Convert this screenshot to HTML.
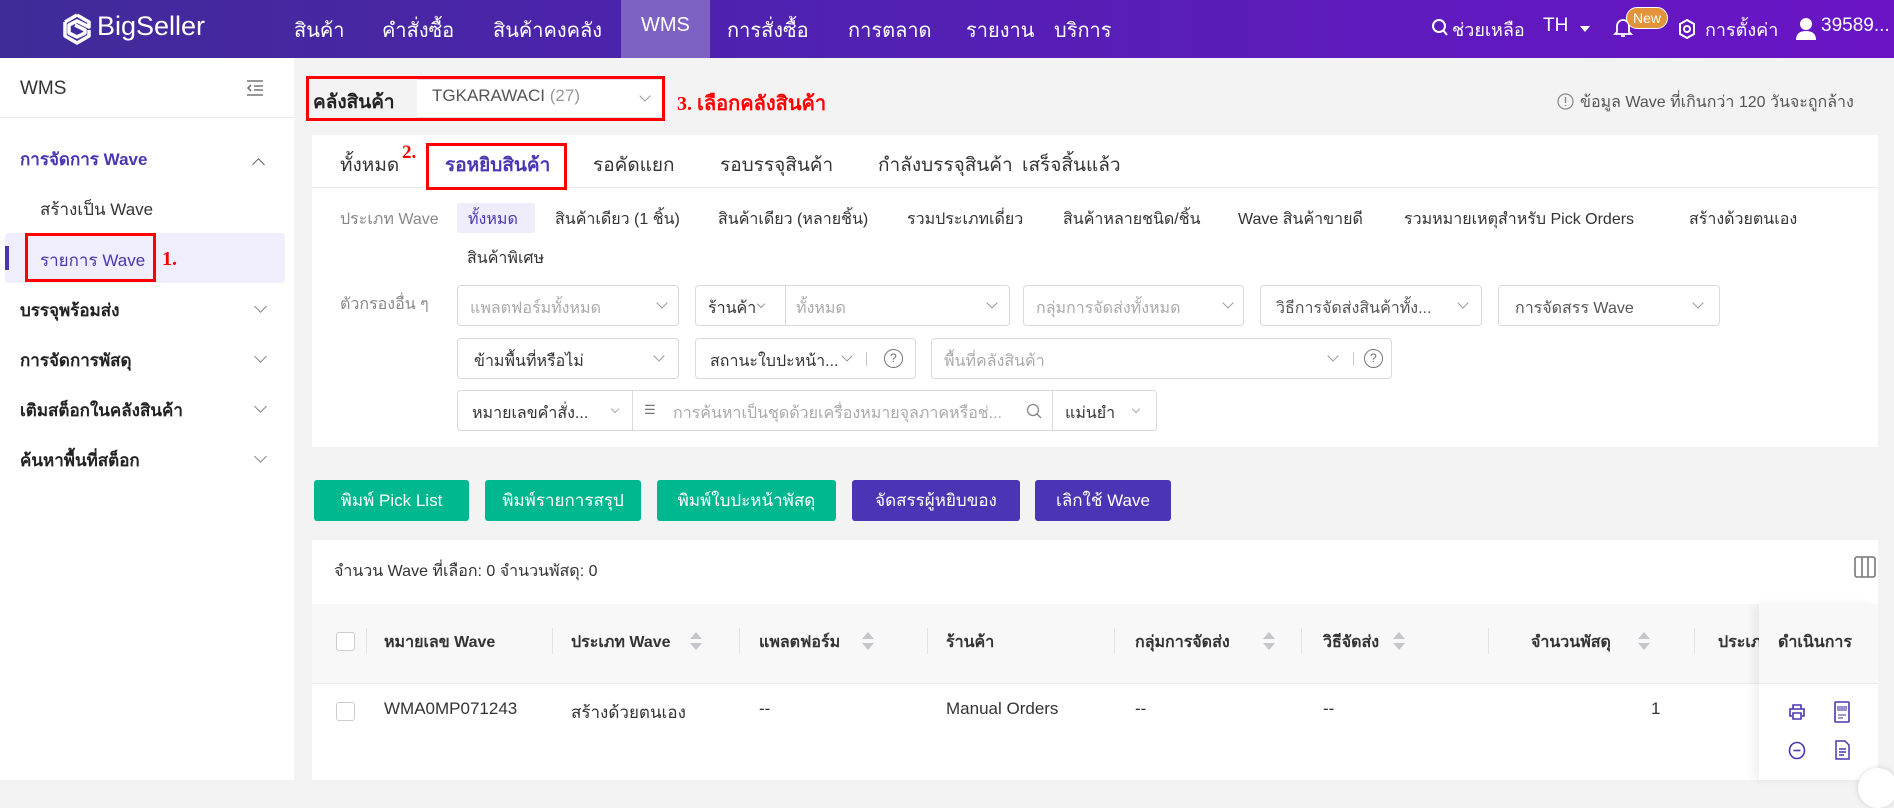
<!DOCTYPE html>
<html><head><meta charset="utf-8">
<style>
*{box-sizing:border-box;margin:0;padding:0}
body{width:1894px;height:780px;overflow:hidden;background:#f3f3f4;font-family:"Liberation Sans",sans-serif;color:#333;position:relative}
.a{position:absolute;white-space:nowrap}
#hdr{left:0;top:0;width:1894px;height:58px;background:linear-gradient(90deg,#402b98 0%,#4f22b0 40%,#6a14c6 100%)}
.nav{color:#fff;font-size:20px;top:14px}
#side{left:0;top:58px;width:294px;height:722px;background:#fff}
.sm{font-size:17px;color:#222;font-weight:bold}
.chev{width:9px;height:9px;border-right:1.5px solid #888;border-bottom:1.5px solid #888;transform:rotate(45deg)}
.card{background:#fff}
.tab{font-size:19px;color:#333;top:150px}
.wt{font-size:16px;color:#333;top:207px}
.box{border:1px solid #d9d9d9;border-radius:4px;background:#fff;height:41px}
.ph{font-size:16px;color:#aaa;top:10px}
.dv{font-size:16px;color:#333;top:10px}
.vc{width:8px;height:8px;border-right:1.3px solid #999;border-bottom:1.3px solid #999;transform:rotate(45deg);top:13px}
.btn{top:480px;height:41px;border-radius:3px;color:#fff;font-size:17px;text-align:center;line-height:41px}
.g{background:#00b890}.p{background:#4b35b5}
.th{font-size:16px;font-weight:bold;color:#333;top:630px}
.sort{width:0;height:0;border-left:6px solid transparent;border-right:6px solid transparent}
.cd{width:1px;height:26px;background:#e4e4e4;top:628px}
.td{font-size:17px;color:#333;top:699px}
.red{border:3px solid #f00}
</style></head><body>
<div id="hdr" class="a"></div>
<svg class="a" style="left:62px;top:13px" width="30" height="32" viewBox="0 0 30 32"><path d="M15 2 L27 9 V14 L15 8 L7 12 V20 L15 24 L23 20 V17 L13 12 M3 9 L15 2 M3 9 V23 L15 30 L27 23 V17" fill="none" stroke="#fff" stroke-width="3.5" stroke-linejoin="round"/></svg>
<div class="a" style="left:97px;top:11px;color:#fff;font-size:27px">BigSeller</div>
<div class="a" style="left:621px;top:0;width:89px;height:58px;background:#7d62c4"></div>
<div class="a nav" style="left:294px">สินค้า</div>
<div class="a nav" style="left:382px">คำสั่งซื้อ</div>
<div class="a nav" style="left:493px">สินค้าคงคลัง</div>
<div class="a nav" style="left:641px">WMS</div>
<div class="a nav" style="left:727px">การสั่งซื้อ</div>
<div class="a nav" style="left:848px">การตลาด</div>
<div class="a nav" style="left:966px">รายงาน</div>
<div class="a nav" style="left:1054px">บริการ</div>
<svg class="a" style="left:1431px;top:18px" width="18" height="20" viewBox="0 0 18 20"><circle cx="8" cy="8" r="6" fill="none" stroke="#fff" stroke-width="2"/><path d="M12 12 L16 17" stroke="#fff" stroke-width="2"/></svg>
<div class="a nav" style="left:1452px;top:15px;font-size:18px">ช่วยเหลือ</div>
<div class="a nav" style="left:1543px;top:15px;font-size:19px">TH</div>
<div class="a" style="left:1580px;top:26px;border-left:5px solid transparent;border-right:5px solid transparent;border-top:6px solid #fff"></div>
<svg class="a" style="left:1613px;top:17px" width="20" height="22" viewBox="0 0 20 22"><path d="M4 15 V9 A6 6 0 0 1 16 9 V15 L18 17 H2 Z M8 19 H12" fill="none" stroke="#fff" stroke-width="1.8"/></svg>
<div class="a" style="left:1626px;top:7px;width:42px;height:22px;background:#e3933a;border-radius:11px;color:#fff;font-size:14px;text-align:center;line-height:21px;border:1px solid #fff">New</div>
<svg class="a" style="left:1677px;top:19px" width="20" height="20" viewBox="0 0 20 20"><path d="M10 1 L17 5 V15 L10 19 L3 15 V5 Z" fill="none" stroke="#fff" stroke-width="2"/><circle cx="10" cy="10" r="3" fill="none" stroke="#fff" stroke-width="2"/></svg>
<div class="a nav" style="left:1705px;top:15px;font-size:18px">การตั้งค่า</div>
<svg class="a" style="left:1795px;top:17px" width="22" height="23" viewBox="0 0 22 23"><circle cx="11" cy="7" r="6" fill="#fff"/><path d="M1 23 Q1 14 11 14 Q21 14 21 23 Z" fill="#fff"/></svg>
<div class="a nav" style="left:1821px;top:15px;font-size:19px">39589...</div>

<div id="side" class="a"></div>
<div class="a" style="left:20px;top:78px;font-size:19px;color:#333">WMS</div>
<svg class="a" style="left:246px;top:80px" width="18" height="16" viewBox="0 0 18 16"><path d="M1 1 H17 M8 6 H17 M8 10 H17 M1 15 H17 M5 5 L2 8 L5 11" fill="none" stroke="#777" stroke-width="1.6"/></svg>
<div class="a" style="left:0;top:117px;width:294px;height:1px;background:#ececec"></div>
<div class="a sm" style="left:20px;top:146px;color:#4a36b0">การจัดการ Wave</div>
<div class="a" style="left:254px;top:160px;width:9px;height:9px;border-left:1.5px solid #666;border-top:1.5px solid #666;transform:rotate(45deg)"></div>
<div class="a" style="left:40px;top:196px;font-size:17px;color:#333">สร้างเป็น Wave</div>
<div class="a" style="left:5px;top:233px;width:280px;height:50px;background:#f0eefc;border-radius:4px"></div>
<div class="a" style="left:5px;top:246px;width:4px;height:24px;background:#4a36b0"></div>
<div class="a" style="left:40px;top:247px;font-size:17px;color:#4a36b0">รายการ Wave</div>
<div class="a red" style="left:25px;top:233px;width:131px;height:49px"></div>
<div class="a" style="left:162px;top:248px;color:#f00;font:bold 20px 'Liberation Serif',serif">1.</div>
<div class="a sm" style="left:20px;top:297px">บรรจุพร้อมส่ง</div>
<div class="a sm" style="left:20px;top:347px">การจัดการพัสดุ</div>
<div class="a sm" style="left:20px;top:397px">เติมสต็อกในคลังสินค้า</div>
<div class="a sm" style="left:20px;top:447px">ค้นหาพื้นที่สต็อก</div>
<div class="a chev" style="left:256px;top:302px"></div>
<div class="a chev" style="left:256px;top:352px"></div>
<div class="a chev" style="left:256px;top:402px"></div>
<div class="a chev" style="left:256px;top:452px"></div>

<div class="a" style="left:309px;top:79px;width:354px;height:39px;background:#fff;border:1px solid #e0e0e0"></div>
<div class="a" style="left:309px;top:79px;width:108px;height:39px;background:#f3f3f4"></div>
<div class="a" style="left:313px;top:87px;font-size:19px;font-weight:bold;color:#222">คลังสินค้า</div>
<div class="a" style="left:432px;top:86px;font-size:17px;color:#555">TGKARAWACI <span style="color:#999">(27)</span></div>
<div class="a vc" style="left:641px;top:92px"></div>
<div class="a red" style="left:306px;top:76px;width:359px;height:45px"></div>
<div class="a" style="left:677px;top:87px;color:#f00;font:bold 20px 'Liberation Serif',serif">3. เลือกคลังสินค้า</div>
<svg class="a" style="left:1557px;top:93px" width="17" height="17" viewBox="0 0 17 17"><circle cx="8.5" cy="8.5" r="7.5" fill="none" stroke="#888" stroke-width="1.2"/><path d="M8.5 4 V10 M8.5 12 V13" stroke="#888" stroke-width="1.4"/></svg>
<div class="a" style="left:1580px;top:90px;font-size:16px;color:#555">ข้อมูล Wave ที่เกินกว่า 120 วันจะถูกล้าง</div>

<div class="a card" style="left:312px;top:135px;width:1566px;height:312px"></div>
<div class="a" style="left:312px;top:187px;width:1566px;height:1px;background:#ebebeb"></div>
<div class="a tab" style="left:340px">ทั้งหมด</div>
<div class="a" style="left:402px;top:142px;color:#f00;font:bold 19px 'Liberation Serif',serif">2.</div>
<div class="a tab" style="left:445px;color:#4a36b0;font-weight:bold">รอหยิบสินค้า</div>
<div class="a red" style="left:426px;top:143px;width:141px;height:47px"></div>
<div class="a tab" style="left:593px">รอคัดแยก</div>
<div class="a tab" style="left:720px">รอบรรจุสินค้า</div>
<div class="a tab" style="left:878px">กำลังบรรจุสินค้า</div>
<div class="a tab" style="left:1022px">เสร็จสิ้นแล้ว</div>

<div class="a wt" style="left:340px;color:#888">ประเภท Wave</div>
<div class="a" style="left:457px;top:203px;width:78px;height:30px;background:#efedfb;border-radius:3px"></div>
<div class="a wt" style="left:468px;color:#4a36b0">ทั้งหมด</div>
<div class="a wt" style="left:555px">สินค้าเดียว (1 ชิ้น)</div>
<div class="a wt" style="left:718px">สินค้าเดียว (หลายชิ้น)</div>
<div class="a wt" style="left:907px">รวมประเภทเดี่ยว</div>
<div class="a wt" style="left:1063px">สินค้าหลายชนิด/ชิ้น</div>
<div class="a wt" style="left:1238px">Wave สินค้าขายดี</div>
<div class="a wt" style="left:1404px">รวมหมายเหตุสำหรับ Pick Orders</div>
<div class="a wt" style="left:1689px">สร้างด้วยตนเอง</div>
<div class="a wt" style="left:467px;top:246px">สินค้าพิเศษ</div>

<div class="a wt" style="left:340px;top:292px;color:#888">ตัวกรองอื่น ๆ</div>
<div class="a box" style="left:457px;top:285px;width:222px"><span class="a ph" style="left:12px">แพลตฟอร์มทั้งหมด</span><span class="a vc" style="left:200px"></span></div>
<div class="a box" style="left:695px;top:285px;width:315px"><span class="a dv" style="left:12px">ร้านค้า</span><span class="a" style="left:62px;top:15px;width:6px;height:6px;border-right:1px solid #999;border-bottom:1px solid #999;transform:rotate(45deg)"></span><span class="a" style="left:89px;top:0;width:1px;height:39px;background:#d9d9d9"></span><span class="a ph" style="left:100px">ทั้งหมด</span><span class="a vc" style="left:292px"></span></div>
<div class="a box" style="left:1023px;top:285px;width:221px"><span class="a ph" style="left:12px">กลุ่มการจัดส่งทั้งหมด</span><span class="a vc" style="left:200px"></span></div>
<div class="a box" style="left:1260px;top:285px;width:222px"><span class="a dv" style="left:15px;color:#555">วิธีการจัดส่งสินค้าทั้ง...</span><span class="a vc" style="left:198px"></span></div>
<div class="a box" style="left:1498px;top:285px;width:222px"><span class="a dv" style="left:16px;color:#555">การจัดสรร Wave</span><span class="a vc" style="left:195px"></span></div>
<div class="a box" style="left:457px;top:338px;width:222px"><span class="a dv" style="left:16px">ข้ามพื้นที่หรือไม่</span><span class="a vc" style="left:197px"></span></div>
<div class="a box" style="left:695px;top:338px;width:221px"><span class="a dv" style="left:14px">สถานะใบปะหน้า...</span><span class="a vc" style="left:147px"></span><span class="a" style="left:170px;top:13px;width:1px;height:14px;background:#ccc"></span><span class="a" style="left:188px;top:10px;width:19px;height:19px;border:1.3px solid #777;border-radius:50%;font-size:12px;text-align:center;line-height:17px;color:#777">?</span></div>
<div class="a box" style="left:931px;top:338px;width:461px"><span class="a ph" style="left:12px">พื้นที่คลังสินค้า</span><span class="a vc" style="left:397px"></span><span class="a" style="left:421px;top:13px;width:1px;height:14px;background:#ccc"></span><span class="a" style="left:432px;top:10px;width:19px;height:19px;border:1.3px solid #777;border-radius:50%;font-size:12px;text-align:center;line-height:17px;color:#777">?</span></div>
<div class="a box" style="left:457px;top:390px;width:700px"><span class="a dv" style="left:14px">หมายเลขคำสั่ง...</span><span class="a" style="left:154px;top:15px;width:6px;height:6px;border-right:1px solid #aaa;border-bottom:1px solid #aaa;transform:rotate(45deg)"></span><span class="a" style="left:174px;top:0;width:1px;height:39px;background:#d9d9d9"></span><span class="a" style="left:186px;top:11px;font-size:13px;color:#777">☰</span><span class="a ph" style="left:215px">การค้นหาเป็นชุดด้วยเครื่องหมายจุลภาคหรือช่...</span><svg class="a" style="left:568px;top:12px" width="16" height="16" viewBox="0 0 16 16"><circle cx="7" cy="7" r="5.5" fill="none" stroke="#888" stroke-width="1.3"/><path d="M11 11 L15 15" stroke="#888" stroke-width="1.3"/></svg><span class="a" style="left:594px;top:0;width:1px;height:39px;background:#d9d9d9"></span><span class="a dv" style="left:607px">แม่นยำ</span><span class="a" style="left:675px;top:15px;width:6px;height:6px;border-right:1px solid #aaa;border-bottom:1px solid #aaa;transform:rotate(45deg)"></span></div>

<div class="a btn g" style="left:314px;width:155px">พิมพ์ Pick List</div>
<div class="a btn g" style="left:485px;width:156px">พิมพ์รายการสรุป</div>
<div class="a btn g" style="left:657px;width:179px">พิมพ์ใบปะหน้าพัสดุ</div>
<div class="a btn p" style="left:852px;width:168px">จัดสรรผู้หยิบของ</div>
<div class="a btn p" style="left:1035px;width:136px">เลิกใช้ Wave</div>

<div class="a card" style="left:312px;top:540px;width:1566px;height:240px"></div>
<div class="a" style="left:334px;top:559px;font-size:16px;color:#333">จำนวน Wave ที่เลือก: 0 จำนวนพัสดุ: 0</div>
<svg class="a" style="left:1854px;top:556px" width="22" height="22" viewBox="0 0 22 22"><rect x="1" y="1" width="20" height="20" rx="2" fill="none" stroke="#777" stroke-width="1.6"/><path d="M8 1 V21 M14 1 V21" stroke="#777" stroke-width="1.6"/></svg>
<div class="a" style="left:312px;top:604px;width:1566px;height:80px;background:#f8f8f9;border-bottom:1px solid #ececec"></div>
<div class="a" style="left:336px;top:632px;width:19px;height:19px;border:1px solid #ccc;border-radius:3px;background:#fff"></div>
<div class="a cd" style="left:366px"></div><div class="a cd" style="left:552px"></div><div class="a cd" style="left:739px"></div><div class="a cd" style="left:927px"></div><div class="a cd" style="left:1114px"></div><div class="a cd" style="left:1301px"></div><div class="a cd" style="left:1488px"></div><div class="a cd" style="left:1694px"></div>
<div class="a th" style="left:384px">หมายเลข Wave</div>
<div class="a th" style="left:571px">ประเภท Wave</div>
<div class="a th" style="left:759px">แพลตฟอร์ม</div>
<div class="a th" style="left:946px">ร้านค้า</div>
<div class="a th" style="left:1135px">กลุ่มการจัดส่ง</div>
<div class="a th" style="left:1323px">วิธีจัดส่ง</div>
<div class="a th" style="left:1531px">จำนวนพัสดุ</div>
<div class="a th" style="left:1718px">ประเภท</div>
<div class="a sort" style="left:690px;top:632px;border-bottom:7px solid #c5c5cc"></div><div class="a sort" style="left:690px;top:643px;border-top:7px solid #c5c5cc"></div>
<div class="a sort" style="left:862px;top:632px;border-bottom:7px solid #c5c5cc"></div><div class="a sort" style="left:862px;top:643px;border-top:7px solid #c5c5cc"></div>
<div class="a sort" style="left:1263px;top:632px;border-bottom:7px solid #c5c5cc"></div><div class="a sort" style="left:1263px;top:643px;border-top:7px solid #c5c5cc"></div>
<div class="a sort" style="left:1393px;top:632px;border-bottom:7px solid #c5c5cc"></div><div class="a sort" style="left:1393px;top:643px;border-top:7px solid #c5c5cc"></div>
<div class="a sort" style="left:1638px;top:632px;border-bottom:7px solid #c5c5cc"></div><div class="a sort" style="left:1638px;top:643px;border-top:7px solid #c5c5cc"></div>
<div class="a" style="left:336px;top:702px;width:19px;height:19px;border:1px solid #ccc;border-radius:3px;background:#fff"></div>
<div class="a td" style="left:384px">WMA0MP071243</div>
<div class="a td" style="left:571px">สร้างด้วยตนเอง</div>
<div class="a td" style="left:759px">--</div>
<div class="a td" style="left:946px">Manual Orders</div>
<div class="a td" style="left:1135px">--</div>
<div class="a td" style="left:1323px">--</div>
<div class="a td" style="left:1651px">1</div>
<div class="a" style="left:1759px;top:604px;width:119px;height:176px;background:#fff;box-shadow:-6px 0 8px rgba(0,0,0,0.06)"></div>
<div class="a" style="left:1759px;top:604px;width:119px;height:80px;background:#f8f8f9;border-bottom:1px solid #ececec"></div>
<div class="a th" style="left:1778px">ดำเนินการ</div>
<svg class="a" style="left:1788px;top:703px" width="18" height="18" viewBox="0 0 18 18"><path d="M5 6 V2 H13 V6 M4 13 H2 V6 H16 V13 H14 M5 10 H13 V16 H5 Z" fill="none" stroke="#4a36b0" stroke-width="1.6"/></svg>
<svg class="a" style="left:1834px;top:701px" width="16" height="22" viewBox="0 0 16 22"><rect x="1" y="1" width="14" height="20" rx="1" fill="none" stroke="#4a36b0" stroke-width="1.6"/><path d="M4 5 V10 M6 5 V10 M8 5 V10 M10 5 V10 M12 5 V10 M4 14 H12 M4 17 H9" stroke="#4a36b0" stroke-width="1.1"/></svg>
<svg class="a" style="left:1788px;top:741px" width="18" height="19" viewBox="0 0 18 19"><ellipse cx="9" cy="9.5" rx="7.5" ry="8" fill="none" stroke="#4a36b0" stroke-width="1.6"/><path d="M5.5 9.5 H12.5" stroke="#4a36b0" stroke-width="1.6"/></svg>
<svg class="a" style="left:1835px;top:740px" width="15" height="20" viewBox="0 0 15 20"><path d="M1 1 H10 L14 5 V19 H1 Z M4 9 H11 M4 12 H11 M4 15 H9" fill="none" stroke="#4a36b0" stroke-width="1.5"/></svg>
<div class="a" style="left:1858px;top:768px;width:40px;height:40px;border-radius:50%;background:#fff;box-shadow:0 0 6px rgba(0,0,0,0.15)"></div>
</body></html>
